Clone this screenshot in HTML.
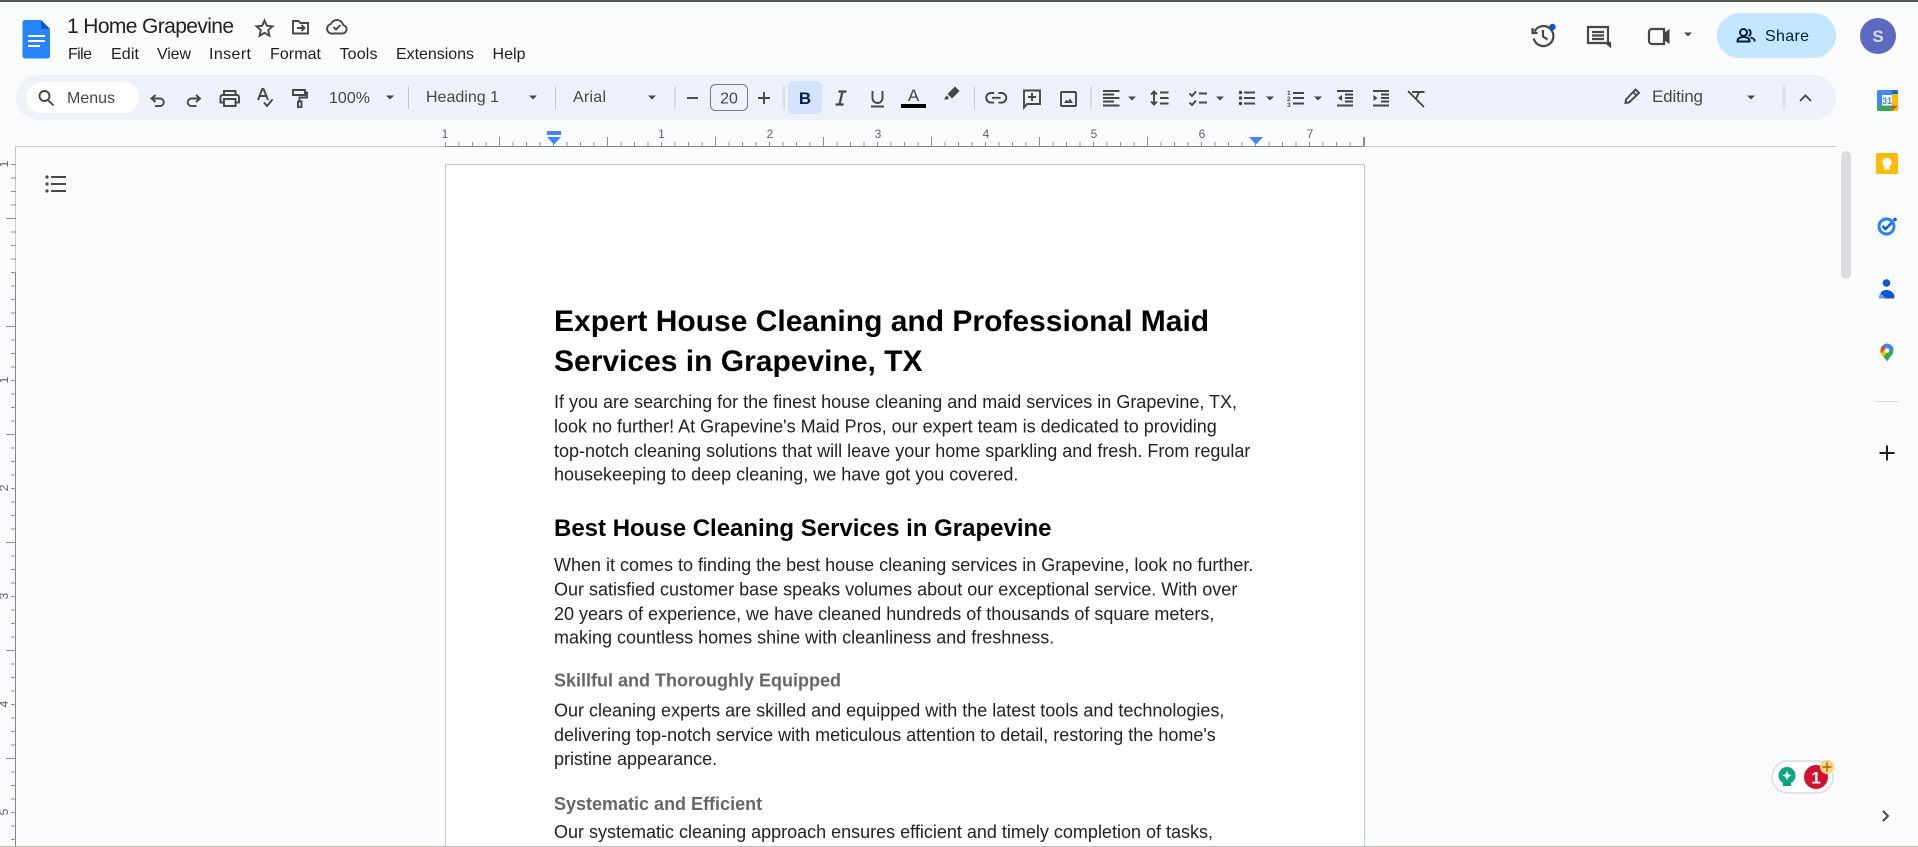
<!DOCTYPE html>
<html lang="en"><head><meta charset="utf-8"><title>1 Home Grapevine - Google Docs</title>
<style>
html,body{margin:0;padding:0;width:1918px;height:847px;overflow:hidden;background:#f9fbfd}
svg{position:absolute;left:0;top:0;display:block}
text{font-family:"Liberation Sans",Arial,sans-serif}
.ui{fill:#444746;font-size:16px}
.m{fill:#1f1f1f;font-size:16px}
.b{fill:#222;font-size:18px}
.h1{fill:#000;font-size:30px;font-weight:700}
.h2{fill:#000;font-size:24px;font-weight:700}
.h3{fill:#666;font-size:18px;font-weight:700}
.r{fill:#5f6368;font-size:12px}
.i{fill:none;stroke:#444746;stroke-width:1.9}
.c{fill:#444746}
</style></head><body>
<svg width="1918" height="847" viewBox="0 0 1918 847" xmlns="http://www.w3.org/2000/svg">
<defs>
<pattern id="hr" patternUnits="userSpaceOnUse" x="445" y="136" width="108" height="10">
<path d="M.5 6v4M14 6v4M27.5 6v4M41 6v4M54.5 1v9M68 6v4M81.5 6v4M95 6v4" stroke="#8d9196" stroke-width="1" fill="none"/>
</pattern>
<pattern id="vr" patternUnits="userSpaceOnUse" x="5" y="164" width="11" height="108">
<path d="M6 .5h5M6 14h5M6 27.5h5M6 41h5M1 54.5h10M6 68h5M6 81.5h5M6 95h5" stroke="#8d9196" stroke-width="1" fill="none"/>
</pattern>
</defs>
<rect width="1918" height="847" fill="#f9fbfd"/>
<rect width="1918" height="2" fill="#4f5a50"/>

<!-- doc logo -->
<path d="M25 20h16l9 9v27a2.500 2.500 0 0 1-2.500 2.500H25a2.500 2.500 0 0 1-2.500-2.500V22.500A2.500 2.500 0 0 1 25 20z" fill="#2684fc"/>
<path d="M41 20l9 9h-9z" fill="#0b57d0"/>
<path d="M28 36h17M28 41h17M28 46h12" stroke="#fff" stroke-width="2" fill="none"/>

<text x="67" y="33" textLength="167" style="font-size:21px;fill:#1f1f1f">1 Home Grapevine</text>
<path class="i" d="M264.500 20.500l2.300 5.200 5.700.6-4.300 3.800 1.200 5.600-4.900-2.900-4.900 2.900 1.200-5.600-4.300-3.800 5.700-.6z"/>
<path class="i" d="M293 21h5.500l2 2h7.500v10.500h-15zM297 28h7M301.500 25l3 3-3 3"/>
<path class="i" d="M333 33.500h9.500a4.300 4.300 0 0 0 .7-8.500 6.500 6.500 0 0 0-12.300-1A4.800 4.800 0 0 0 333 33.500zM333.500 27l2.500 2.500 4.500-4.500"/>

<text class="m" x="68" y="59" textLength="24">File</text>
<text class="m" x="111" y="59" textLength="28">Edit</text>
<text class="m" x="157" y="59" textLength="34">View</text>
<text class="m" x="209" y="59" textLength="42">Insert</text>
<text class="m" x="270" y="59" textLength="51">Format</text>
<text class="m" x="339.500" y="59" textLength="38">Tools</text>
<text class="m" x="396" y="59" textLength="78">Extensions</text>
<text class="m" x="492.500" y="59" textLength="33">Help</text>

<!-- top right -->
<path class="i" style="stroke-width:2.200" d="M1534.500 31.500a10 10 0 1 1-.8 7M1532.500 28v5h5M1543 30v6.500l4.500 3"/>
<circle cx="1552.500" cy="27" r="3.200" fill="#0b57d0"/>
<path class="i" style="stroke-width:2.200" d="M1588 27h20v16h2v3l-3.500-3h-18.500zM1592 32h12M1592 35.500h12M1592 39h12"/>
<path class="i" style="stroke-width:2.200" d="M1652 29h12v15h-12a3 3 0 0 1-3-3V32a3 3 0 0 1 3-3z"/><path class="c" d="M1664 33l5.500-4v15l-5.500-4z"/>
<path class="c" d="M1684 32.500h8l-4 4z"/>
<rect x="1717" y="13" width="119" height="45" rx="22.500" fill="#c2e7ff"/>
<g fill="none" stroke="#001d35" stroke-width="1.900"><circle cx="1743.500" cy="32.500" r="3.500"/><path d="M1737.500 41.500v-1c0-2 3-3.500 6-3.500s6 1.500 6 3.500v1zM1748.500 29.500a3.500 3.500 0 0 1 0 6.500M1750.500 37.500c2 .5 4 1.500 4 3v1"/></g>
<text x="1765" y="41" textLength="44" style="font-size:16px;fill:#001d35">Share</text>
<circle cx="1878" cy="36" r="18" fill="#5c6bc0"/>
<text x="1878" y="42" text-anchor="middle" style="font-size:17px;font-weight:700;fill:#d6daf5">S</text>

<!-- toolbar -->
<rect x="16" y="75" width="1820" height="45" rx="22.500" fill="#edf2fa"/>
<rect x="26" y="82" width="113" height="31" rx="15.500" fill="#fff"/>
<circle cx="44.500" cy="96" r="5" class="i"/><path class="i" d="M48 100l5.500 5.500"/>
<text class="ui" x="67" y="103" textLength="48">Menus</text>
<path class="i" d="M155.500 95l-4 3.500 4 3.500M152 98.500h8a3.800 3.800 0 0 1 0 7.600h-5"/>
<path class="i" d="M196 95l4 3.500-4 3.500M199.500 98.500h-8a3.800 3.800 0 0 0 0 7.600h5"/>
<path class="i" d="M224 95v-4h11.500v4M224 102.500h-3.500V97a2 2 0 0 1 2-2h14.500a2 2 0 0 1 2 2v5.500h-3.500M224 99h11.500v7H224z"/>
<path class="i" d="M258 100l4.300-11h1.200l4.500 11M259.500 96h7M264 102.500l3 3.500 5.500-6.500"/>
<path class="i" d="M293 90h12v5h-12zM305 92.500h2v5h-7.500v4"/><rect x="298" y="101.500" width="3.500" height="5.500" class="i"/>
<text class="ui" x="329" y="103" textLength="41">100%</text>
<path class="c" d="M386 95.500h8l-4 4z"/>
<path d="M408.500 86v23" stroke="#c7c7c7"/>
<text class="ui" x="426" y="102" textLength="73">Heading 1</text>
<path class="c" d="M529 95.500h8l-4 4z"/>
<path d="M555.500 86v23" stroke="#c7c7c7"/>
<text class="ui" x="573" y="102" textLength="33">Arial</text>
<path class="c" d="M648 95.500h8l-4 4z"/>
<path d="M675 86v23" stroke="#c7c7c7"/>
<path class="i" d="M687 98h11"/>
<rect x="710.500" y="84.500" width="37" height="26" rx="5" fill="none" stroke="#747775"/>
<text x="729" y="103.500" text-anchor="middle" style="font-size:16px;fill:#444746">20</text>
<path class="i" d="M764 92v12M758 98h12"/>
<path d="M784 86v23" stroke="#c7c7c7"/>
<rect x="788" y="81" width="34" height="33" rx="5" fill="#d3e3fd"/>
<text x="805" y="104" text-anchor="middle" style="font-size:17px;font-weight:700;fill:#041e49">B</text>
<path d="M838.500 91.500h8M835.500 104.500h8M842.500 91.500l-3 13" fill="none" stroke="#444746" stroke-width="2.300"/>
<path class="i" d="M872.500 91v7a5 5 0 0 0 10 0v-7M871 106.500h13"/>
<text x="913.500" y="101" text-anchor="middle" style="font-size:17px;fill:#444746">A</text>
<rect x="901" y="104" width="25" height="4" fill="#000"/>
<path class="c" d="M955 86.500l4.500 4.500-7.500 7.500-4.500-4.500zM946.500 95.500l2.500 2.500-1.500 1.500h-3.500z"/>
<path d="M974.500 86v23" stroke="#c7c7c7"/>
<path class="i" d="M994 93h-3a4.800 4.800 0 0 0 0 9.600h3M998.500 93h3a4.800 4.800 0 0 1 0 9.600h-3M992 97.800h8.500"/>
<path class="i" d="M1024 90.500h16v13.500h-13l-3 3.500zM1032 93v8M1028 97h8"/>
<rect class="i" x="1061" y="92" width="15" height="14" rx="1"/><path class="c" d="M1064 103l2.500-3.500 1.500 2 2-3 3 4.500z"/>
<path d="M1091 86v23" stroke="#c7c7c7"/>
<path class="i" d="M1103 91h16.500M1103 94.500h11M1103 98h16.500M1103 101.500h11M1103 105.500h16.500"/>
<path class="c" d="M1128 96.500h8l-4 4z"/>
<path class="i" d="M1154 92v12M1151 94.500l3-3 3 3M1151 101.500l3 3 3-3M1160 92.500h8.500M1160 98h8.500M1160 103.500h8.500"/>
<path class="i" d="M1189.500 93.500l2.500 2.500 4-4.500M1189.500 102.500l2.500 2.500 4-4.500M1199 93.500h8M1199 102.500h8"/>
<path class="c" d="M1216 96.500h8l-4 4z"/>
<path class="i" d="M1244 92.500h11M1244 98h11M1244 103.500h11"/><circle cx="1240.500" cy="92.500" r="1.700" class="c"/><circle cx="1240.500" cy="98" r="1.700" class="c"/><circle cx="1240.500" cy="103.500" r="1.700" class="c"/>
<path class="c" d="M1266 96.500h8l-4 4z"/>
<path class="i" d="M1293 93h11M1293 98h11M1293 103.500h11"/>
<text x="1287" y="95" style="font-size:6.500px;font-weight:700;fill:#444746">1</text><text x="1287" y="101" style="font-size:6.500px;font-weight:700;fill:#444746">2</text><text x="1287" y="107" style="font-size:6.500px;font-weight:700;fill:#444746">3</text>
<path class="c" d="M1314 96.500h8l-4 4z"/>
<path class="i" d="M1337 91h16M1345 94.500h8M1345 98h8M1345 101.500h8M1337 105.500h16"/><path class="c" d="M1342 95l-4 3 4 3z"/>
<path class="i" d="M1373 91h16M1381 94.500h8M1381 98h8M1381 101.500h8M1373 105.500h16"/><path class="c" d="M1373.500 95l4 3-4 3z"/>
<path class="i" d="M1408 91l16 16M1412 92h12.500M1419 92l-3 7"/>
<path class="i" d="M1625.500 103l.5-3.500 9.500-10 3.500 3.500-10 9.500zM1633 92l3.500 3.500"/>
<text class="ui" x="1652" y="102" textLength="51" style="font-size:17px">Editing</text>
<path class="c" d="M1747 95.500h8l-4 4z"/>
<path d="M1784 86v23" stroke="#c7c7c7"/>
<path class="i" d="M1800 101l5.500-5.500 5.500 5.500"/>

<!-- horizontal ruler -->
<path d="M16 146.500H1836" stroke="#c7c7c7"/>
<path d="M445 146.500H1364" stroke="#80868b"/>
<rect x="445" y="136" width="919" height="10" fill="url(#hr)"/>
<path d="M1364.500 137v9" stroke="#80868b"/>
<text x="445" y="138" class="r" text-anchor="middle">1</text><text x="661.500" y="138" class="r" text-anchor="middle">1</text><text x="770" y="138" class="r" text-anchor="middle">2</text><text x="878" y="138" class="r" text-anchor="middle">3</text><text x="986" y="138" class="r" text-anchor="middle">4</text><text x="1094" y="138" class="r" text-anchor="middle">5</text><text x="1202" y="138" class="r" text-anchor="middle">6</text><text x="1310" y="138" class="r" text-anchor="middle">7</text>
<rect x="547" y="131" width="14" height="4" fill="#4285f4"/>
<path d="M547 137h14l-7 7.500z" fill="#4285f4"/>
<path d="M1249 137h14l-7 7.500z" fill="#4285f4"/>

<!-- vertical ruler -->
<path d="M15.500 146V272" stroke="#c7c7c7"/>
<path d="M15.500 272V847" stroke="#80868b"/>
<rect x="5" y="164" width="11" height="683" fill="url(#vr)"/>
<text transform="translate(8 164) rotate(-90)" text-anchor="middle" class="r">1</text>
<text transform="translate(8 380) rotate(-90)" text-anchor="middle" class="r">1</text>
<text transform="translate(8 488) rotate(-90)" text-anchor="middle" class="r">2</text>
<text transform="translate(8 596) rotate(-90)" text-anchor="middle" class="r">3</text>
<text transform="translate(8 704) rotate(-90)" text-anchor="middle" class="r">4</text>
<text transform="translate(8 812) rotate(-90)" text-anchor="middle" class="r">5</text>
<path d="M51 177h15M51 184h15M51 191h15" stroke="#444746" stroke-width="2" fill="none"/>
<circle cx="47" cy="177" r="1.600" class="c"/><circle cx="47" cy="184" r="1.600" class="c"/><circle cx="47" cy="191" r="1.600" class="c"/>

<!-- page -->
<rect x="445.500" y="164.500" width="919" height="690" fill="#fff" stroke="#c7c7c7"/>
<text class="h1" x="554" y="331">Expert House Cleaning and Professional Maid</text>
<text class="h1" x="554" y="371">Services in Grapevine, TX</text>
<text class="b" x="554" y="408">If you are searching for the finest house cleaning and maid services in Grapevine, TX,</text>
<text class="b" x="554" y="432.500">look no further! At Grapevine's Maid Pros, our expert team is dedicated to providing</text>
<text class="b" x="554" y="457">top-notch cleaning solutions that will leave your home sparkling and fresh. From regular</text>
<text class="b" x="554" y="480.500">housekeeping to deep cleaning, we have got you covered.</text>
<text class="h2" x="554" y="536">Best House Cleaning Services in Grapevine</text>
<text class="b" x="554" y="571">When it comes to finding the best house cleaning services in Grapevine, look no further.</text>
<text class="b" x="554" y="595.500">Our satisfied customer base speaks volumes about our exceptional service. With over</text>
<text class="b" x="554" y="620">20 years of experience, we have cleaned hundreds of thousands of square meters,</text>
<text class="b" x="554" y="643.500">making countless homes shine with cleanliness and freshness.</text>
<text class="h3" x="554" y="686.500">Skillful and Thoroughly Equipped</text>
<text class="b" x="554" y="716.500">Our cleaning experts are skilled and equipped with the latest tools and technologies,</text>
<text class="b" x="554" y="741">delivering top-notch service with meticulous attention to detail, restoring the home's</text>
<text class="b" x="554" y="765">pristine appearance.</text>
<text class="h3" x="554" y="810">Systematic and Efficient</text>
<text class="b" x="554" y="838">Our systematic cleaning approach ensures efficient and timely completion of tasks,</text>

<!-- scrollbar -->
<rect x="1841" y="151" width="10" height="128" rx="5" fill="#dadce0"/>

<!-- side panel -->
<rect x="1877" y="90" width="21" height="21" rx="2" fill="#4285f4"/>
<rect x="1892" y="90" width="6" height="21" fill="#fbbc04"/>
<path d="M1892 90h4a2 2 0 0 1 2 2v2h-6z" fill="#1967d2"/>
<path d="M1877 105.500h15v5.500h-13a2 2 0 0 1-2-2z" fill="#34a853"/>
<path d="M1892 105.500h6L1892 111z" fill="#ea4335"/>
<rect x="1882" y="95" width="10" height="10.500" fill="#fff"/>
<text x="1887" y="103.800" text-anchor="middle" style="font-size:9px;font-weight:700;fill:#4285f4">31</text>
<rect x="1876" y="153" width="22" height="21" rx="1.500" fill="#fbbc04"/>
<circle cx="1887" cy="162.500" r="4.600" fill="#fff"/><rect x="1884" y="167" width="6" height="2.500" fill="#fff"/>
<circle cx="1886.500" cy="226.500" r="7.500" fill="none" stroke="#2684fc" stroke-width="3"/>
<path d="M1882.500 226l3 3 6-6" fill="none" stroke="#0b57d0" stroke-width="2.400"/><circle cx="1895" cy="219.500" r="1.800" fill="#0b57d0"/>
<circle cx="1886.500" cy="283" r="3.800" fill="#0b57d0"/>
<path d="M1879 298.500c0-5 3-8.500 7.500-8.500s8 3.500 8 7c0 1-.8 1.500-1.500 1.500z" fill="#0b57d0"/>
<path d="M1879 298.500c0-2 .6-4 1.800-5.500l5 5.500z" fill="#669df6"/>
<path d="M1887 361.500c-2-4-6.500-6.500-6.500-11a6.500 6.500 0 0 1 13 0c0 4.500-4.500 7-6.500 11z" fill="#34a853"/>
<path d="M1880.500 350.500a6.500 6.500 0 0 1 2-4.700l3 3-4.500 4.500z" fill="#ea4335"/>
<path d="M1881 353.300l4.500-4.500 2 3-4 5z" fill="#fbbc04"/>
<path d="M1883 345a6.500 6.500 0 0 1 10.500 5.500l-5-1z" fill="#4285f4"/>
<circle cx="1887" cy="350.500" r="2.300" fill="#fff"/>
<path d="M1875 401.500h23" stroke="#dadce0"/>
<path d="M1887 445.500v15M1879.500 453h15" stroke="#1f1f1f" stroke-width="2" fill="none"/>
<path class="i" style="stroke-width:2" d="M1883 811l5 5-5 5"/>

<!-- grammarly -->
<rect x="1772" y="761" width="61" height="32" rx="16" fill="#fff" stroke="#dadce0" stroke-width="1.500"/>
<circle cx="1787" cy="775.500" r="8.500" fill="#11a683"/>
<rect x="1783" y="783" width="8" height="3" fill="#0f9d78"/>
<path d="M1787 771l1.400 3.100 3.100 1.400-3.100 1.400-1.400 3.100-1.400-3.100-3.100-1.400 3.100-1.400z" fill="#fff"/>
<circle cx="1816" cy="777" r="12" fill="#d1112f"/>
<text x="1816" y="783.500" text-anchor="middle" style="font-size:17px;font-weight:700;fill:#fff">1</text>
<circle cx="1827" cy="767" r="7" fill="#fbd27e"/>
<path d="M1822.500 767h9M1827 762.500v9" stroke="#8a5a00" stroke-width="1.300"/>
<path d="M0 846.500H1918" stroke="#bdbdb6"/>
</svg>
</body></html>
